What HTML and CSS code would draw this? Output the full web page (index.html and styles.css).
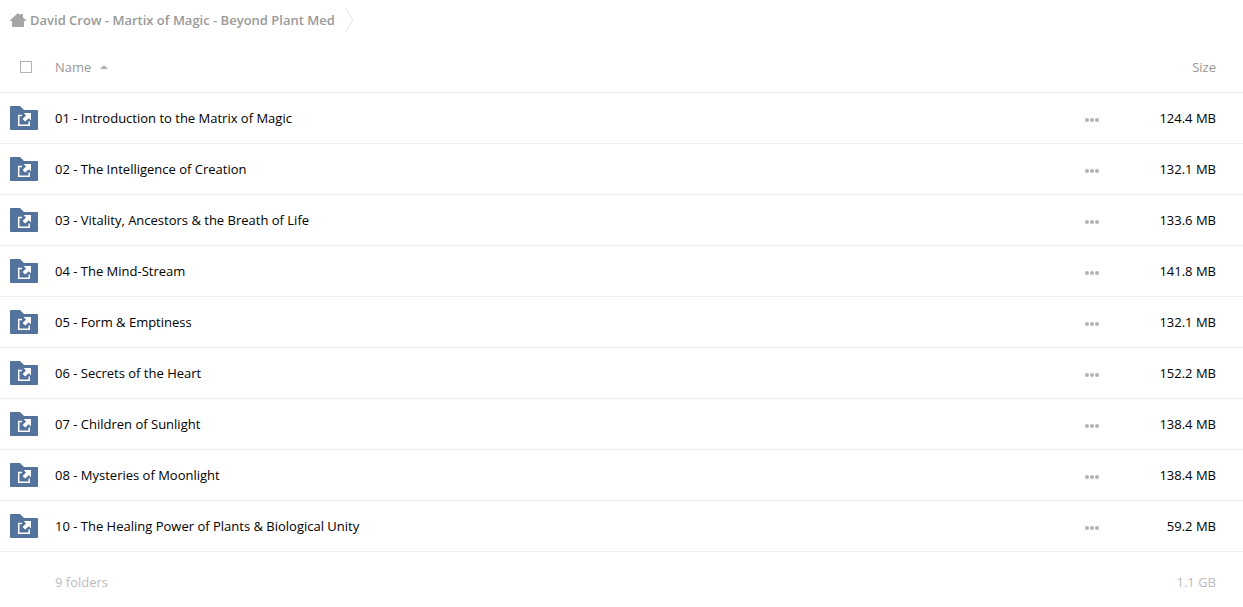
FILE: index.html
```html
<!DOCTYPE html>
<html lang="en">
  <head>
    <meta charset="utf-8">
    <title>David Crow - Martix of Magic - Beyond Plant Med</title>
    <link rel="stylesheet" href="styles.css">
  </head>
  <body>
    <!-- shared icons -->
    <svg class="sprite" width="0" height="0">
      <symbol id="icon-folder" viewBox="0 0 28 24">
        <path fill="#54739c" d="M1 0H10L14 4H27Q28 4 28 5V23Q28 24 27 24H1Q0 24 0 23V1Q0 0 1 0Z"/>
        <path fill="none" stroke="#fff" stroke-width="1.5" d="M12 9.6H8.7V19.2H19.2V15.5"/>
        <path fill="#fff" d="M13.6 7H21V14.4L18.8 12.2L15.2 15.6L12.6 13L16 9.4Z"/>
      </symbol>
      <symbol id="icon-more" viewBox="0 0 14 4">
        <circle cx="2" cy="2" r="2"/>
        <circle cx="7" cy="2" r="2"/>
        <circle cx="12" cy="2" r="2"/>
      </symbol>
    </svg>

    <nav class="breadcrumb">
      <a href="#" class="crumb">
        <svg class="home" width="16" height="14" viewBox="0 0 16 14"><path d="M8 0L10.5 2.2V1H13V4.4L16 7.3V8H14V14H2V8H0V7.3Z"/></svg>
        <span>David Crow - Martix of Magic - Beyond Plant Med</span>
      </a>
      <svg class="separator" width="9" height="24" viewBox="0 0 9 24"><path d="M0.5 0L8 12L0.5 24"/></svg>
    </nav>

    <table class="files">
      <thead>
        <tr>
          <th class="select"><input type="checkbox" aria-label="Select all"></th>
          <th class="name"><a href="#">Name<span class="sort"></span></a></th>
          <th class="actions"></th>
          <th class="size"><a href="#">Size</a></th>
        </tr>
      </thead>
      <tbody>
        <tr>
          <td class="select"><svg class="folder"><use href="#icon-folder"/></svg></td>
          <td class="name"><a href="#">01 - Introduction to the Matrix of Magic</a></td>
          <td class="actions"><button type="button" aria-label="More"><svg class="more"><use href="#icon-more"/></svg></button></td>
          <td class="size">124.4 MB</td>
        </tr>
        <tr>
          <td class="select"><svg class="folder"><use href="#icon-folder"/></svg></td>
          <td class="name"><a href="#">02 - The Intelligence of Creation</a></td>
          <td class="actions"><button type="button" aria-label="More"><svg class="more"><use href="#icon-more"/></svg></button></td>
          <td class="size">132.1 MB</td>
        </tr>
        <tr>
          <td class="select"><svg class="folder"><use href="#icon-folder"/></svg></td>
          <td class="name"><a href="#">03 - Vitality, Ancestors &amp; the Breath of Life</a></td>
          <td class="actions"><button type="button" aria-label="More"><svg class="more"><use href="#icon-more"/></svg></button></td>
          <td class="size">133.6 MB</td>
        </tr>
        <tr>
          <td class="select"><svg class="folder"><use href="#icon-folder"/></svg></td>
          <td class="name"><a href="#">04 - The Mind-Stream</a></td>
          <td class="actions"><button type="button" aria-label="More"><svg class="more"><use href="#icon-more"/></svg></button></td>
          <td class="size">141.8 MB</td>
        </tr>
        <tr>
          <td class="select"><svg class="folder"><use href="#icon-folder"/></svg></td>
          <td class="name"><a href="#">05 - Form &amp; Emptiness</a></td>
          <td class="actions"><button type="button" aria-label="More"><svg class="more"><use href="#icon-more"/></svg></button></td>
          <td class="size">132.1 MB</td>
        </tr>
        <tr>
          <td class="select"><svg class="folder"><use href="#icon-folder"/></svg></td>
          <td class="name"><a href="#">06 - Secrets of the Heart</a></td>
          <td class="actions"><button type="button" aria-label="More"><svg class="more"><use href="#icon-more"/></svg></button></td>
          <td class="size">152.2 MB</td>
        </tr>
        <tr>
          <td class="select"><svg class="folder"><use href="#icon-folder"/></svg></td>
          <td class="name"><a href="#">07 - Children of Sunlight</a></td>
          <td class="actions"><button type="button" aria-label="More"><svg class="more"><use href="#icon-more"/></svg></button></td>
          <td class="size">138.4 MB</td>
        </tr>
        <tr>
          <td class="select"><svg class="folder"><use href="#icon-folder"/></svg></td>
          <td class="name"><a href="#">08 - Mysteries of Moonlight</a></td>
          <td class="actions"><button type="button" aria-label="More"><svg class="more"><use href="#icon-more"/></svg></button></td>
          <td class="size">138.4 MB</td>
        </tr>
        <tr>
          <td class="select"><svg class="folder"><use href="#icon-folder"/></svg></td>
          <td class="name"><a href="#">10 - The Healing Power of Plants &amp; Biological Unity</a></td>
          <td class="actions"><button type="button" aria-label="More"><svg class="more"><use href="#icon-more"/></svg></button></td>
          <td class="size">59.2 MB</td>
        </tr>
      </tbody>
      <tfoot>
        <tr>
          <td class="select"></td>
          <td class="name">9 folders</td>
          <td class="actions"></td>
          <td class="size">1.1 GB</td>
        </tr>
      </tfoot>
    </table>
  </body>
</html>
```
FILE: styles.css
```css
body {
  margin: 0;
  background: #fff;
  color: #000;
  font-family: "Open Sans", sans-serif;
  font-size: 13px;
  line-height: 20px;
}
a {color: inherit; text-decoration: none;}
svg {display: block;}
.sprite {position: absolute;}

/* breadcrumb */
.breadcrumb {
  display: flex;
  align-items: center;
  gap: 10px;
  height: 40px;
  padding: 0 10px;
}
.crumb {
  display: flex;
  align-items: center;
  gap: 4px;
  color: #999;
  font-weight: 600;
}
.home {fill: #a6a6a6;}
.separator {fill: none; stroke: #e4e4e4;}

/* file list */
.files {
  width: 100%;
  border-collapse: separate;
  border-spacing: 0;
  table-layout: fixed;
}
.files th, .files td {
  height: 50px;
  padding: 0;
  border-bottom: 1px solid #eee;
  font-weight: 400;
  text-align: left;
}
.files th {height: 50px; padding-top: 2px; color: #999;}
.files tfoot td {
  height: 60px;
  border-bottom: 0;
  color: #bbb;
}
.files .select {width: 45px; padding-left: 10px;}
.files .actions {width: 45px;}
.files .size {width: 86px; padding-right: 27px; text-align: right;}

.files input {
  display: block;
  appearance: none;
  width: 12px;
  height: 12px;
  margin: 0 10px;
  border: 1px solid #b3b3b3;
  background: #fff;
}
.files th a {
  display: inline-flex;
  align-items: center;
  gap: 9px;
}
.sort {
  border: 4px solid transparent;
  border-top: 0;
  border-bottom-color: #b3b3b3;
}
.folder {width: 28px; height: 24px;}
.files button {
  display: block;
  padding: 12px 0 8px;
  border: 0;
  background: none;
}
.more {width: 14px; height: 4px; fill: #b3b3b3;}
```
